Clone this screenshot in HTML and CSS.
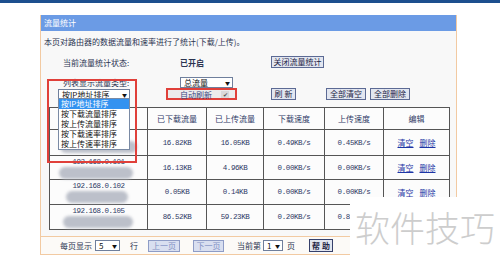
FILE: index.html
```html
<!DOCTYPE html>
<html lang="zh-CN">
  <head>
    <meta charset="UTF-8" />
    <title>流量统计</title>
    <link rel="stylesheet" href="styles.css">
  </head>
  <body>
    <div class="topbar"></div>

    <div class="panel">
      <div class="panel-head">流量统计</div>
      <p class="intro">本页对路由器的数据流量和速率进行了统计(下载/上传)。</p>

      <div class="form-row row-status">
        <span class="label">当前流量统计状态:</span>
        <span class="value bold">已开启</span>
        <button class="btn btn-wide">关闭流量统计</button>
      </div>
      <div class="form-row row-type">
        <span class="label">列表显示流量类型:</span>
        <span class="select sel-type">总流量<i>▼</i></span>
      </div>
      <div class="form-row row-sort">
        <span class="select sel-sort">按IP地址排序<i>▼</i></span>
        <span class="auto">自动刷新 <span class="check">✔</span></span>
        <button class="btn btn-refresh">刷 新</button>
        <button class="btn btn-clear">全部清空</button>
        <button class="btn btn-del">全部删除</button>
      </div>

      <table class="stats">
        <colgroup>
          <col style="width: 98px" />
          <col style="width: 59px" />
          <col style="width: 57px" />
          <col style="width: 61px" />
          <col style="width: 59px" />
          <col style="width: 66px" />
        </colgroup>
        <thead>
          <tr>
            <th>IP地址/MAC地址</th>
            <th>已下载流量</th>
            <th>已上传流量</th>
            <th>下载速度</th>
            <th>上传速度</th>
            <th>编辑</th>
          </tr>
        </thead>
        <tbody>
          <tr class="r1">
            <td class="host"><span class="ip">192.168.0.108</span><span class="mac m1"></span></td>
            <td class="num">16.82KB</td>
            <td class="num">16.05KB</td>
            <td class="num">0.49KB/s</td>
            <td class="num">0.45KB/s</td>
            <td class="edit"><a href="#">清空</a><a href="#">删除</a></td>
          </tr>
          <tr class="r2">
            <td class="host"><span class="ip">192.168.0.101</span><span class="mac m2"></span></td>
            <td class="num">16.13KB</td>
            <td class="num">4.96KB</td>
            <td class="num">0.00KB/s</td>
            <td class="num">0.00KB/s</td>
            <td class="edit"><a href="#">清空</a><a href="#">删除</a></td>
          </tr>
          <tr class="r3">
            <td class="host"><span class="ip">192.168.0.102</span><span class="mac m3"></span></td>
            <td class="num">0.05KB</td>
            <td class="num">0.14KB</td>
            <td class="num">0.00KB/s</td>
            <td class="num">0.00KB/s</td>
            <td class="edit"><a href="#">清空</a><a href="#">删除</a></td>
          </tr>
          <tr class="r4">
            <td class="host"><span class="ip">192.168.0.105</span><span class="mac m4"></span></td>
            <td class="num">86.52KB</td>
            <td class="num">59.23KB</td>
            <td class="num">0.20KB/s</td>
            <td class="num">0.80KB/s</td>
            <td class="edit"><a href="#">清空</a><a href="#">删除</a></td>
          </tr>
        </tbody>
      </table>

      <div class="panel-foot">
        <span class="f-per">每页显示</span>
        <span class="select sel-rows">5<i>▼</i></span>
        <span class="f-row">行</span>
        <button class="btn btn-off btn-prev">上一页</button>
        <button class="btn btn-off btn-next">下一页</button>
        <span class="f-cur">当前第</span>
        <span class="select sel-page">1<i>▼</i></span>
        <span class="f-page">页</span>
        <button class="btn btn-help">帮 助</button>
      </div>

      <!-- open dropdown + red marks -->
      <ul class="dropdown">
        <li class="active">按IP地址排序</li>
        <li>按下载流量排序</li>
        <li>按上传流量排序</li>
        <li>按下载速率排序</li>
        <li>按上传速率排序</li>
      </ul>
      <div class="mark-sort"></div>
    </div>

    <div class="watermark">软件技巧</div>
  </body>
</html>
```

FILE: styles.css
```css
body {
  margin: 0;
  width: 500px;
  height: 272px;
  overflow: hidden;
  position: relative;
  background: #fff;
  font-family: "Noto Sans CJK SC", "Liberation Sans", sans-serif;
  font-size: 8px;
  color: #2b3350;
}

.topbar {
  height: 3px;
  background: #1d4f8e;
}

.panel {
  position: relative;
  margin: 12px 0 0 40px;
  width: 415px;
  border: 1px solid #f2caa2;
  border-top: none;
  background: #f8f8f8;
}

.panel-head {
  height: 16px;
  line-height: 16px;
  padding-left: 3px;
  background: #6b9be5;
  color: #fff;
}

.intro {
  margin: 5px 0 0 3px;
  height: 12px;
  line-height: 12px;
}

.form-row {
  display: flex;
  align-items: center;
  height: 12px;
}

.row-status {
  margin-top: 8px;
}

.row-type {
  margin-top: 8px;
}

.label {
  width: 117px;
  margin-left: 22px;
}

.value {
  width: 91px;
}

.bold {
  font-weight: bold;
}

.btn {
  height: 12px;
  padding: 0;
  border: 1px solid #5c6a94;
  background: #e2e6f0;
  color: #1e2444;
  font-family: inherit;
  font-size: 8px;
  line-height: 10px;
}

.btn-wide {
  width: 53px;
}

.select {
  display: flex;
  align-items: center;
  justify-content: space-between;
  box-sizing: border-box;
  height: 11px;
  padding: 0 2px 0 3px;
  border: 1px solid #6f7f9c;
  background: #fff;
  color: #111;
  line-height: 9px;
}

.select i {
  font-style: normal;
  font-size: 5px;
}

.sel-type {
  width: 53px;
}

.sel-sort {
  width: 72px;
  margin-left: 17px;
}

.auto {
  display: flex;
  align-items: center;
  box-sizing: border-box;
  width: 71px;
  height: 12px;
  margin-left: 36px;
  padding-left: 12px;
  border: 2px solid #e0403a;
  background: #ececec;
  color: #3b4a80;
}

.check {
  display: inline-block;
  width: 8px;
  height: 7px;
  margin-left: 9px;
  line-height: 7px;
  font-size: 6px;
  text-align: center;
  color: #555;
  background: #dadada;
}

.btn-refresh {
  width: 25px;
  margin-left: 34px;
}

.btn-clear {
  width: 40px;
  margin-left: 30px;
}

.btn-del {
  width: 40px;
  margin-left: 4px;
}

.stats {
  margin: 7px 0 0 8px;
  width: 400px;
  table-layout: fixed;
  border-collapse: collapse;
  background: #fcfcfc;
}

.stats th,
.stats td {
  border: 1px solid #555;
  padding: 0;
  text-align: center;
  font-weight: normal;
  color: #2f3a66;
}

.stats thead tr {
  height: 22px;
}

.r1 {
  height: 26px;
}

.r2 {
  height: 24px;
}

.r3,
.r4 {
  height: 25px;
}

.num {
  font-family: "Liberation Mono", monospace;
  font-size: 7.5px;
  letter-spacing: -0.4px;
}

.host {
  vertical-align: top;
}

.ip {
  display: block;
  margin-top: 1px;
  height: 10px;
  line-height: 10px;
  font-family: "Liberation Mono", monospace;
  font-size: 7.5px;
  letter-spacing: -0.5px;
}

.mac {
  display: block;
  height: 12px;
  border-radius: 6px;
  background: #bcc0ca;
  filter: blur(1.5px);
}

.m1 {
  margin: 0 10px 0 10px;
}

.m2 {
  margin: 0 14px 0 9px;
}

.m3 {
  margin: 0 19px 0 16px;
}

.m4 {
  margin: 0 14px 0 13px;
}

.edit a {
  color: #1d36a6;
  text-decoration: underline;
  margin: 0 3px;
}

.panel-foot {
  display: flex;
  align-items: center;
  height: 17px;
  margin-top: 6px;
  padding-left: 19px;
  border-top: 1px solid #f2caa2;
  background: #fcfaf7;
}

.sel-rows {
  width: 25px;
  margin-left: 3px;
}

.f-row {
  margin-left: 10px;
}

.btn-off {
  width: 32px;
  border-color: #8e9cc6;
  background: #d9dff0;
  color: #8190c4;
}

.btn-prev {
  margin-left: 10px;
}

.btn-next {
  width: 31px;
  margin-left: 13px;
}

.f-cur {
  margin-left: 13px;
}

.sel-page {
  width: 20px;
  margin-left: 2px;
}

.f-page {
  margin-left: 4px;
}

.btn-help {
  width: 24px;
  height: 13px;
  margin-left: 14px;
  font-weight: bold;
  border-color: #36406a;
}

.dropdown {
  position: absolute;
  left: 17px;
  top: 83px;
  width: 72px;
  box-sizing: border-box;
  margin: 0;
  padding: 0;
  list-style: none;
  border: 1px solid #7a8aa4;
  background: #fff;
  color: #111;
}

.dropdown li {
  height: 10px;
  line-height: 10px;
  padding-left: 2px;
}

.dropdown .active {
  background: #3392f0;
  color: #fff;
}

.mark-sort {
  position: absolute;
  left: 6px;
  top: 64px;
  width: 90px;
  height: 84px;
  box-sizing: border-box;
  border: 2px solid #e0403a;
}

.watermark {
  position: absolute;
  left: 350px;
  top: 197px;
  width: 150px;
  height: 75px;
  box-sizing: border-box;
  padding: 10px 0 0 5px;
  background: #fff;
  color: #cdcdcd;
  font-size: 35px;
  font-weight: 300;
  line-height: 40px;
}
```
